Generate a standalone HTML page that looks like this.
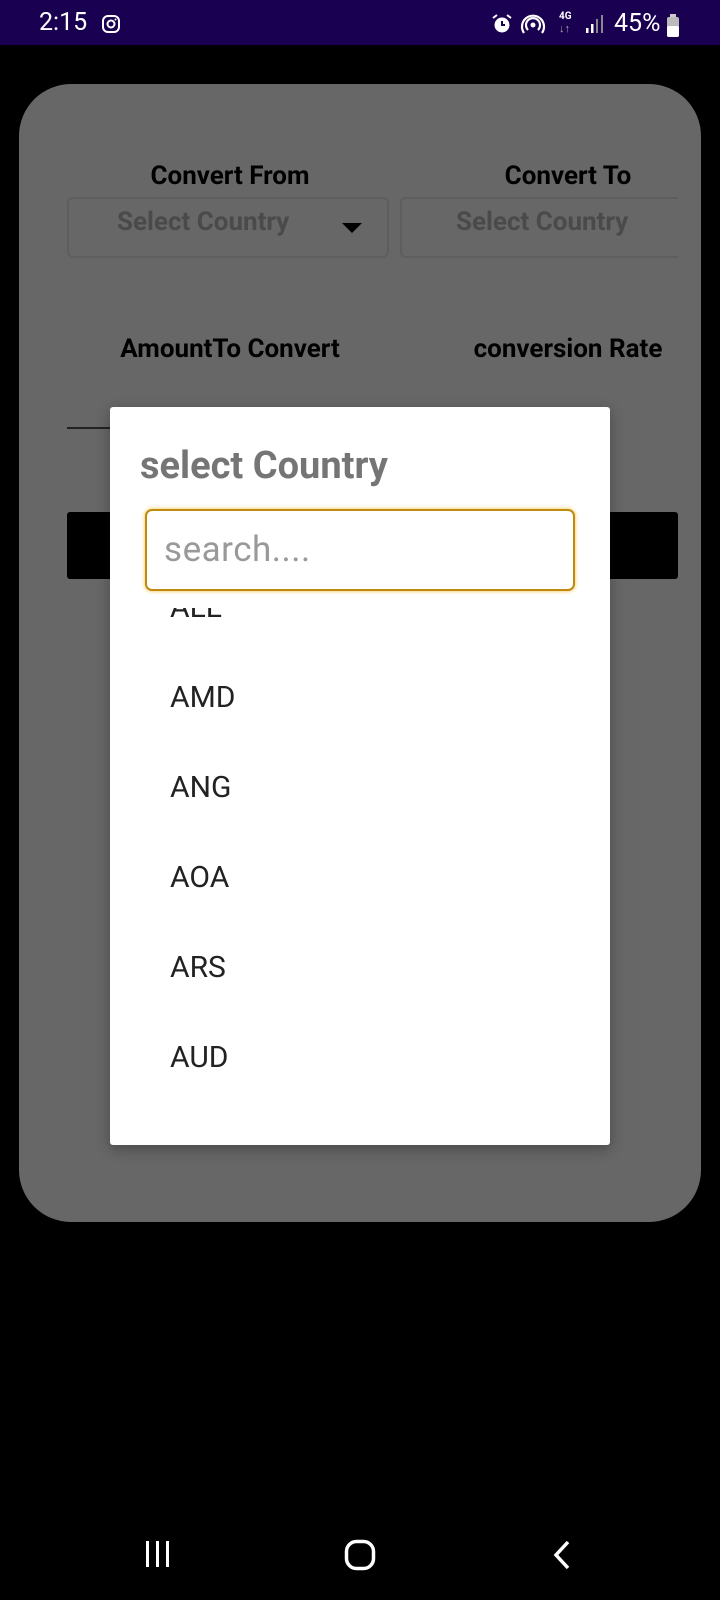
<!DOCTYPE html>
<html><head><meta charset="utf-8"><style>
*{margin:0;padding:0;box-sizing:border-box}
body{width:720px;height:1600px;background:#000;position:relative;overflow:hidden;font-family:"Roboto","Liberation Sans",sans-serif}
.sb{position:absolute;left:0;top:0;width:720px;height:45px;background:#1a0050;color:#fff}
.abs{position:absolute}
.card{left:19px;top:84px;width:682px;height:1138px;background:#676767;border-radius:52px}
.lbl{font-weight:bold;font-size:26px;color:#000;transform:translateX(-50%);white-space:nowrap}
.dd{border:2px solid #5e5e5e;border-radius:6px}
.ph{color:#4a4a4a;font-size:26px;font-weight:bold}
.dlg{left:110px;top:407px;width:500px;height:738px;background:#fff;border-radius:3px;overflow:hidden;box-shadow:0 4px 14px rgba(0,0,0,.3)}
.item{position:absolute;left:60px;font-size:30px;color:#222;line-height:1;transform:translateY(-50%)}
</style></head><body>
<div class="sb">
 <div class="abs" style="left:39px;top:8px;font-size:25px">2:15</div>
 <svg class="abs" style="left:101px;top:14px" width="20" height="20" viewBox="0 0 20 20"><rect x="2" y="2" width="16" height="16" rx="5" fill="none" stroke="#fff" stroke-width="2"/><circle cx="10" cy="10" r="3.5" fill="none" stroke="#fff" stroke-width="2"/><circle cx="14.5" cy="5.5" r="1" fill="#fff"/></svg>
 <svg class="abs" style="left:490px;top:13px" width="24" height="22" viewBox="0 0 24 22"><circle cx="12" cy="12" r="7.5" fill="#fff"/><path d="M12 8v4h3" stroke="#1a0050" stroke-width="2" fill="none"/><path d="M3 5l4-3M21 5l-4-3" stroke="#fff" stroke-width="2"/></svg>
 <svg class="abs" style="left:520px;top:13px" width="26" height="22" viewBox="0 0 26 22"><circle cx="13" cy="12" r="2.5" fill="#fff"/><path d="M8 17a7 7 0 1 1 10 0M4 20a11 11 0 1 1 18 0" stroke="#fff" stroke-width="2.2" fill="none"/></svg>
 <div class="abs" style="left:559px;top:11px;font-size:10px;font-weight:bold">4G</div>
 <div class="abs" style="left:559px;top:22px;font-size:11px;color:#aaa">↓↑</div>
 <svg class="abs" style="left:585px;top:14px" width="20" height="20" viewBox="0 0 20 20"><rect x="1" y="14" width="2.5" height="5" fill="#fff"/><rect x="6" y="10" width="2.5" height="9" fill="#fff"/><rect x="11" y="5" width="2" height="14" fill="#888"/><rect x="16" y="1" width="2" height="18" fill="#888"/></svg>
 <div class="abs" style="left:614px;top:9px;font-size:25px">45%</div>
 <svg class="abs" style="left:666px;top:14px" width="14" height="24" viewBox="0 0 14 24"><rect x="4" y="0" width="6" height="3" fill="#ccc"/><rect x="1" y="3" width="12" height="20" rx="2" fill="#bbb"/><rect x="1" y="12" width="12" height="11" rx="2" fill="#fff"/></svg>
</div>
<div class="abs card"></div>
<div class="abs lbl" style="left:230px;top:161px">Convert From</div>
<div class="abs lbl" style="left:568px;top:161px">Convert To</div>
<div class="abs dd" style="left:67px;top:197px;width:322px;height:61px"></div>
<div class="abs ph" style="left:117px;top:207px">Select Country</div>
<svg class="abs" style="left:342px;top:222px" width="20" height="12"><path d="M0 1h20L10 11z" fill="#000"/></svg>
<div class="abs" style="left:400px;top:197px;width:278px;height:61px;border:2px solid #5e5e5e;border-right:none;border-radius:6px 0 0 6px"></div>
<div class="abs ph" style="left:456px;top:207px">Select Country</div>
<div class="abs lbl" style="left:230px;top:334px">AmountTo Convert</div>
<div class="abs lbl" style="left:568px;top:334px">conversion Rate</div>
<div class="abs" style="left:67px;top:427px;width:100px;height:2px;background:#222"></div>
<div class="abs" style="left:67px;top:512px;width:611px;height:67px;background:#000;border-radius:3px"></div>
<div class="abs dlg">
 <div class="abs" style="left:30px;top:37px;font-size:38px;font-weight:bold;color:#757575">select Country</div>
 <div class="abs" style="left:0;top:201px;width:500px;height:537px;overflow:hidden">
  <div class="item" style="top:0px">ALL</div>
  <div class="item" style="top:90px">AMD</div>
  <div class="item" style="top:180px">ANG</div>
  <div class="item" style="top:270px">AOA</div>
  <div class="item" style="top:360px">ARS</div>
  <div class="item" style="top:450px">AUD</div>
 </div>
 <div class="abs" style="left:35px;top:102px;width:430px;height:82px;border:2.5px solid #c08a10;border-radius:7px;background:#fff;box-shadow:0 0 4px #f0c040"></div>
 <div class="abs" style="left:54px;top:122px;font-size:35px;color:#999;letter-spacing:0.5px">search....</div>
</div>
<svg class="abs" style="left:146px;top:1541px" width="26" height="28"><rect x="0" y="0" width="3" height="26" fill="#fff"/><rect x="10" y="0" width="3" height="26" fill="#fff"/><rect x="20" y="0" width="3" height="26" fill="#fff"/></svg>
<svg class="abs" style="left:344px;top:1539px" width="32" height="32"><rect x="2.5" y="2.5" width="27" height="27" rx="10" fill="none" stroke="#fff" stroke-width="3.5"/></svg>
<svg class="abs" style="left:552px;top:1540px" width="20" height="30"><path d="M16 2L4 15l12 13" fill="none" stroke="#fff" stroke-width="3.5"/></svg>
</body></html>
